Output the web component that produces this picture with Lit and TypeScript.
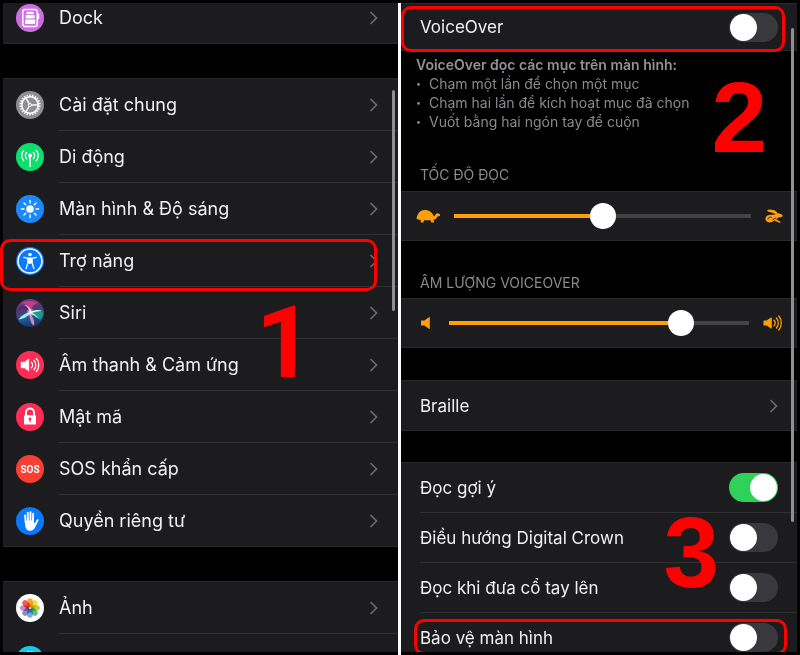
import { LitElement, html, css, svg, nothing } from "lit";
import { customElement, property } from "lit/decorators.js";

const around = (n: number, draw: (deg: number, i: number) => unknown) =>
  Array.from({ length: n }, (_, i) => draw((360 / n) * i, i));

const petals = ["#f99a1c", "#f4dc1f", "#a3cc3a", "#4fb482", "#5aa4dc", "#8a78c4", "#c07ab4", "#ee4b3c"];

const icons: Record<string, unknown> = {
  dock: svg`
    <circle cx="14" cy="14" r="14" fill="#cf6ee4"/>
    <rect x="6.8" y="5.6" width="14.4" height="16.8" rx="2.4" fill="none" stroke="#fff" stroke-width="1.5"/>
    <path d="M22.4 10v4.5" stroke="#fff" stroke-width="1.6" stroke-linecap="round"/>
    <rect x="10.4" y="7.8" width="7.4" height="2.4" rx=".8" fill="#fff"/>
    <rect x="9.6" y="11" width="9" height="3.6" rx=".8" fill="#fff"/>
    <rect x="9" y="15.6" width="10.2" height="4.4" rx=".8" fill="#fff"/>`,
  gear: svg`
    <circle cx="14" cy="14" r="14" fill="#8e8e93"/>
    <circle cx="14" cy="14" r="8.200" fill="none" stroke="#fff" stroke-width="1.500"/>
    ${around(22, (d) => svg`<path d="M14 3.400v2.600" stroke="#fff" stroke-width="1.400" transform="rotate(${d} 14 14)"/>`)}
    ${around(3, (d) => svg`<path d="M15 14h7" stroke="#fff" stroke-width="1.400" transform="rotate(${d} 14 14)"/>`)}
    <circle cx="14" cy="14" r="1.500" fill="#8e8e93" stroke="#fff" stroke-width="1"/>`,
  antenna: svg`
    <circle cx="14" cy="14" r="14" fill="#0bdf6e"/>
    <circle cx="14" cy="12.6" r="2" fill="#fff"/>
    <g fill="none" stroke="#fff" stroke-width="1.5" stroke-linecap="round">
      <path d="M14 13v10.4"/>
      <path d="M10.6 9.6a4.4 4.4 0 0 0 0 6M17.4 9.6a4.4 4.4 0 0 1 0 6M7.6 7.6a8 8 0 0 0 0 10M20.4 7.6a8 8 0 0 1 0 10"/>
    </g>`,
  sun: svg`
    <circle cx="14" cy="14" r="14" fill="#1b88fb"/>
    <circle cx="14" cy="14" r="3.8" fill="#fff"/>
    ${around(8, (d) => svg`<path d="M14 5.4v2.6" stroke="#fff" stroke-width="1.4" stroke-linecap="round" transform="rotate(${d} 14 14)"/>`)}`,
  access: svg`
    <circle cx="14" cy="14" r="14" fill="#0a7afc"/>
    <circle cx="14" cy="14" r="12" fill="none" stroke="#fff" stroke-width="1.5"/>
    <circle cx="14" cy="7.5" r="1.8" fill="#fff"/>
    <path d="M7.8 10.3l4.2 1.1v4.2l-1.9 6M20.2 10.3L16 11.4v4.2l1.9 6" fill="none" stroke="#fff" stroke-width="1.3" stroke-linecap="round" stroke-linejoin="round"/>
    <path d="M11.6 10.4h4.8v5.6l-2.4 1-2.4-1z" fill="#fff"/>`,
  siri: svg`
    <defs>
      <linearGradient id="orb" x1=".3" y1="0" x2=".6" y2="1">
        <stop offset="0" stop-color="#7d3a86"/><stop offset=".4" stop-color="#51396f"/>
        <stop offset=".65" stop-color="#1f5c9c"/><stop offset="1" stop-color="#1c2c66"/>
      </linearGradient>
      <radialGradient id="core"><stop offset="0" stop-color="#fff"/><stop offset="1" stop-color="#fff" stop-opacity="0"/></radialGradient>
    </defs>
    <circle cx="14" cy="14" r="14" fill="url(#orb)"/>
    <path d="M14 14C12 8 8 4 5 4 12 .5 20 2 22 4c-4 1-7 5-8 10z" fill="#d83f8c" opacity=".8"/>
    <path d="M14 13C9 9 4 10 1 13 2 8 6 6 8 7c3 0 5 3 6 6z" fill="#3c2a7c" opacity=".7"/>
    <path d="M14 14c4-3 9-3 13-1 0 4-1 6-3 8-3-4-6-6-10-7z" fill="#27a08f" opacity=".85"/>
    <path d="M13.500 14c2 3 6 7 4.500 12.500-3-1-4.500-7-4.500-12.500z" fill="#e88cc8" opacity=".9"/>
    <path d="M14 13.500C9 14 5 17 2.500 20.500 7 20 12 18 14 13.500z" fill="#9df0fa"/>
    <path d="M14 14C13 10 11 7 8 6c4 0 7 3 7.500 7z" fill="#f3c7e6" opacity=".8"/>
    <path d="M14 14c3-3 8-4 12-2-4 0-8 1-12 2z" fill="#d6fff2"/>
    <path d="M14 14c4 0 7 2 9 6-3-2-6-4-9-6z" fill="#7df0c8"/>
    <circle cx="14.500" cy="13.500" r="4.500" fill="url(#core)"/>`,
  sound: svg`
    <circle cx="14" cy="14" r="14" fill="#fd2d55"/>
    <path d="M5 11.200h3.300L12.800 8v12l-4.500-3.200H5z" fill="#fff" stroke="#fff" stroke-width=".6" stroke-linejoin="round"/>
    <path d="M15.400 11.200a4 4 0 0 1 0 5.600M17.900 9.200a7 7 0 0 1 0 9.600M20.300 7.400a10 10 0 0 1 0 13.200" fill="none" stroke="#fff" stroke-width="1.300" stroke-linecap="round"/>`,
  lock: svg`
    <circle cx="14" cy="14" r="14" fill="#fd2d55"/>
    <path d="M10 13V9.600a4 4 0 0 1 8 0V13" fill="none" stroke="#fff" stroke-width="2"/>
    <rect x="8" y="12.200" width="12" height="9.400" rx="1.200" fill="#fff"/>
    <circle cx="14" cy="16" r="1.400" fill="#fd2d55"/><path d="M14 16v3.200" stroke="#fd2d55" stroke-width="1.100"/>`,
  sos: svg`
    <circle cx="14" cy="14" r="14" fill="#fc3d32"/>
    <text class="sos" x="14" y="18" text-anchor="middle" fill="#fff">SOS</text>`,
  hand: svg`
    <circle cx="14" cy="14" r="14" fill="#0a7afc"/>
    <g stroke="#fff" stroke-width="1.900" stroke-linecap="round" fill="none">
      <path d="M9.100 8.400l.6 7M11.700 5.800l.3 8M14.500 5.200v8M17.200 6.600l-.3 8M21.600 13.200l-2.800 5"/>
    </g>
    <path d="M8.800 13.500h9.100v3l2-1.600 1 .6c-1 3.400-2.400 8.300-6.700 8.300-4 0-5.300-3.200-5.400-10.300z" fill="#fff"/>`,
  photos: svg`
    <circle cx="14" cy="14" r="14" fill="#fff"/>
    <g class="blend">${around(8, (d, i) => svg`<rect x="11.200" y="4.200" width="5.600" height="9" rx="2.800" fill=${petals[i]} opacity=".88" transform="rotate(${d} 14 14)"/>`)}</g>`,
  cyan: svg`
    <circle cx="14" cy="14" r="14" fill="#16c9ea"/>
    <path d="M12.400 5v8M15.600 5v8" stroke="#fff" stroke-width="1.500"/>`,
};

@customElement("round-icon")
class RoundIcon extends LitElement {
  @property() name = "";
  static styles = css`
    :host { display: block; flex: none; width: 28px; height: 28px; }
    svg { display: block; width: 28px; height: 28px; }
    .sos { font: 700 10px "Roboto", sans-serif; }
    .blend { isolation: isolate; }
    .blend rect { mix-blend-mode: multiply; }
  `;
  render() {
    return html`<svg viewBox="0 0 28 28" aria-hidden="true">${icons[this.name]}</svg>`;
  }
}

const chevron = html`<svg class="chevron" viewBox="0 0 9 14" aria-hidden="true">
  <path d="M1.500 1l6 6-6 6" fill="none" stroke="#6c6c70" stroke-width="1.700" />
</svg>`;

const shared = css`
  * { box-sizing: border-box; }
  :host {
    display: block;
    height: 100%;
    min-width: 0;
    position: relative;
    font-family: "Inter", "Noto Sans", sans-serif;
    color: #f1f1f3;
  }
  .panel { position: relative; height: 100%; overflow: hidden; background: #000; }
  ul { list-style: none; margin: 0; padding: 0; }
  .group { background: #1c1c1e; border-top: 1px solid #29292c; }
  .chevron { flex: none; width: 9px; height: 14px; }
  .scroll { position: absolute; width: 3px; border-radius: 2px; background: #8f8f91; }
  .frame { position: absolute; border: 3px solid #f00; border-radius: 10px; pointer-events: none; }
  .step {
    position: absolute;
    font: 700 100px/100px "Liberation Sans", Arial, sans-serif;
    color: #f00;
    pointer-events: none;
  }
`;

const groups: [string, string][][] = [
  [["dock", "Dock"]],
  [
    ["gear", "Cài đặt chung"],
    ["antenna", "Di động"],
    ["sun", "Màn hình & Độ sáng"],
    ["access", "Trợ năng"],
    ["siri", "Siri"],
    ["sound", "Âm thanh & Cảm ứng"],
    ["lock", "Mật mã"],
    ["sos", "SOS khẩn cấp"],
    ["hand", "Quyền riêng tư"],
  ],
  [["photos", "Ảnh"], ["cyan", ""]],
];

@customElement("settings-list")
class SettingsList extends LitElement {
  static styles = [shared, css`
    .lists { display: flex; flex-direction: column; gap: 34px; margin-top: -12px; }
    .row { display: flex; align-items: center; height: 52px; padding-left: 13px; gap: 15px; color: inherit; text-decoration: none; }
    .body {
      flex: 1; display: flex; align-items: center; justify-content: space-between;
      height: 100%; padding-right: 20px; border-bottom: 1px solid #303033;
      font-size: 18px; line-height: 24px;
    }
    li:last-child .body { border-bottom-color: transparent; }
    .group { border-bottom: 0; box-shadow: inset 0 -1px #29292c; }
    .scroll { right: 3px; top: 87px; height: 221px; }
    .frame { left: -3px; right: 21px; top: 236px; height: 52px; }
    .step { right: 85px; top: 290px; font-family: "Roboto", Arial, sans-serif; }
  `];
  render() {
    return html`
      <div class="panel">
        <div class="lists">
          ${groups.map((g) => html`<ul class="group">
            ${g.map(([icon, label]) => html`<li>
              <a class="row" href="#">
                <round-icon name=${icon}></round-icon>
                <span class="body"><span>${label}</span>${label ? chevron : nothing}</span>
              </a>
            </li>`)}
          </ul>`)}
        </div>
        <div class="scroll"></div>
      </div>
      <div class="frame"></div>
      <div class="step">1</div>
    `;
  }
}

const turtle = html`<svg class="turtle" viewBox="0 0 24 14" aria-hidden="true" fill="#ff9f0a">
  <path d="M.5 9.500C1.500 3.500 5 1 9 1s7.500 2.500 8.800 6.200c1-.2 1.400-1.200 2-2 .6-.9 1.600-1 2.600-.8 1.200.3 2 1.200 1.800 2-.2.900-1.400.9-2.700 1.100-.8 2-2 3-4 3.300l.7 2.700h-2.800l-.9-2.300H8l-.6 2.300H4.700V11C3 10.800 1.500 10.700.5 9.500z"/>
</svg>`;
const hare = html`<svg class="hare" viewBox="0 0 19 16" aria-hidden="true" fill="#ff9f0a">
  <path d="M2 2.200C5 .2 9 1.200 12.200 5.400 10.600 5.600 9 5.200 7.600 4.500 5.500 3.800 3.400 4 2 2.200z"/>
  <path d="M7.600 2C9 .6 12 2.600 13.200 5.200c2.600.1 5 1 5.500 2.600-.1 1.200-2.400 1.900-4.600 1.800l-2.300 1.900 4.800 2.800-.9 1-6-2.600C8 14.500 6 15.200 3.700 14.600 1 14 0 12 .6 9.900 1.400 7.400 4.600 6.200 7.600 6.800l3.400-.4C10.200 4.600 8.600 3.600 7.600 2z"/>
  <path d="M3 11.500c.2-2 2.600-2.900 4.300-1.900M7.800 12.200l4-2.400" fill="none" stroke="#1c1c1e" stroke-width=".9"/>
</svg>`;
const quiet = html`<svg class="quiet" viewBox="0 0 19 16" aria-hidden="true" fill="#ff9f0a">
  <path d="M5 5.500h3.400L13 2.200q.8-.4.800.5v10.600q0 .9-.8.500L8.400 10.500H5z"/>
</svg>`;
const loud = html`<svg class="loud" viewBox="0 0 20 16" aria-hidden="true" fill="#ff9f0a">
  <path d="M.5 5.500h3.200L8 2.500q.8-.4.800.5v10q0 .9-.8.500L3.700 10.500H.5z"/>
  <path d="M11 5.300a4 4 0 0 1 0 5.400M13.400 3a7.500 7.500 0 0 1 0 10M15.800 1a11 11 0 0 1 0 14" fill="none" stroke="#ff9f0a" stroke-width="1.300" stroke-linecap="round"/>
</svg>`;

@customElement("voiceover-page")
class VoiceOverPage extends LitElement {
  static styles = [shared, css`
    .group { box-shadow: inset 0 -1px #29292c; }
    .line {
      display: flex; align-items: center; justify-content: space-between;
      height: 50px; margin-left: 19px; padding-right: 19px;
      font-size: 17px; line-height: 24px; color: inherit; text-decoration: none;
      border-bottom: 1px solid #303033;
    }
    .line:last-child { border-bottom-color: transparent; }
    .first .line { height: 47px; }
    .help { margin: 4px 15px 0; font-size: 14px; line-height: 19px; color: #8a8a8e; }
    .help strong { font-weight: 600; display: block; color: #929296; }
    .help li { display: flex; gap: 8px; }
    .help li::before { content: "•"; font-size: 9px; width: 5px; }
    h2 { margin: 0; padding: 0 19px; font-size: 14px; font-weight: 400; line-height: 16px; color: #8a8a8e; }
    .speed { margin-top: 36px; padding-bottom: 8px; }
    .volume { margin-top: 34px; padding-bottom: 7px; }
    .slide { display: flex; align-items: center; gap: 14px; height: 49px; padding: 0 14px 2px 15px; }
    .slide svg { flex: none; display: block; height: 16px; }
    .turtle { width: 24px; }
    .quiet { width: 19px; }
    .hare { width: 18px; }
    .loud { width: 20px; }
    .nav { margin-top: 32px; }
    .options { margin-top: 31px; }

    .range {
      appearance: none; flex: 1; min-width: 0; margin: 0; height: 26px;
      background: linear-gradient(to right, #ff9f0a var(--fill), #434346 var(--fill)) center / 100% 4px no-repeat;
      border-radius: 2px;
    }
    .range::-webkit-slider-thumb { appearance: none; width: 26px; height: 26px; border-radius: 50%; background: #fff; }
    .toggle {
      appearance: none; flex: none; position: relative; margin: 0; width: 49px; height: 29px;
      border-radius: 15px; background: #39393d;
    }
    .toggle::before {
      content: ""; position: absolute; left: 1px; top: 1px; width: 27px; height: 27px;
      border-radius: 50%; background: #fff;
    }
    .toggle:checked { background: #30d158; }
    .toggle:checked::before { left: auto; right: 1px; }

    .scroll { right: 3px; top: 25px; height: 494px; }
    .frame.top { left: 0; right: 12px; top: 3px; height: 46px; }
    .frame.low { left: 13px; right: 10px; top: 616px; height: 36px; }
    .step.two { right: 30px; top: 64px; }
    .step.three { right: 78px; top: 499px; }
  `];

  toggle(id: string, label: string, on = false) {
    return html`<label class="line" for=${id}><span>${label}</span>
      <input class="toggle" id=${id} type="checkbox" role="switch" .checked=${on} /></label>`;
  }

  slider(labelId: string, value: number, before: unknown, after: unknown) {
    return html`<div class="group"><div class="slide">
      ${before}
      <input class="range" type="range" aria-labelledby=${labelId} min="0" max="100" .value=${String(value)} style="--fill:${value}%" />
      ${after}
    </div></div>`;
  }

  render() {
    return html`
      <div class="panel">
        <div class="group first">${this.toggle("voiceover", "VoiceOver")}</div>
        <div class="help">
          <strong>VoiceOver đọc các mục trên màn hình:</strong>
          <ul>
            <li>Chạm một lần để chọn một mục</li>
            <li>Chạm hai lần để kích hoạt mục đã chọn</li>
            <li>Vuốt bằng hai ngón tay để cuộn</li>
          </ul>
        </div>
        <h2 class="speed" id="speed">TỐC ĐỘ ĐỌC</h2>
        ${this.slider("speed", 50, turtle, hare)}
        <h2 class="volume" id="volume">ÂM LƯỢNG VOICEOVER</h2>
        ${this.slider("volume", 80, quiet, loud)}
        <div class="group nav"><a class="line" href="#"><span>Braille</span>${chevron}</a></div>
        <div class="group options">
          ${this.toggle("hints", "Đọc gợi ý", true)}
          ${this.toggle("crown", "Điều hướng Digital Crown")}
          ${this.toggle("wrist", "Đọc khi đưa cổ tay lên")}
          ${this.toggle("curtain", "Bảo vệ màn hình")}
        </div>
        <div class="scroll"></div>
        <div class="frame low"></div>
      </div>
      <div class="frame top"></div>
      <div class="step two">2</div>
      <div class="step three">3</div>
    `;
  }
}

@customElement("app-root")
class AppRoot extends LitElement {
  static styles = css`
    :host {
      display: grid;
      grid-template-columns: 395fr 3px 396fr;
      grid-template-rows: minmax(0, 1fr);
      box-sizing: border-box;
      height: 100vh;
      padding: 3px;
      background: #000;
    }
    .divider { background: #fff; margin-bottom: -3px; }
  `;
  render() {
    return html`<settings-list></settings-list><div class="divider"></div><voiceover-page></voiceover-page>`;
  }
}
